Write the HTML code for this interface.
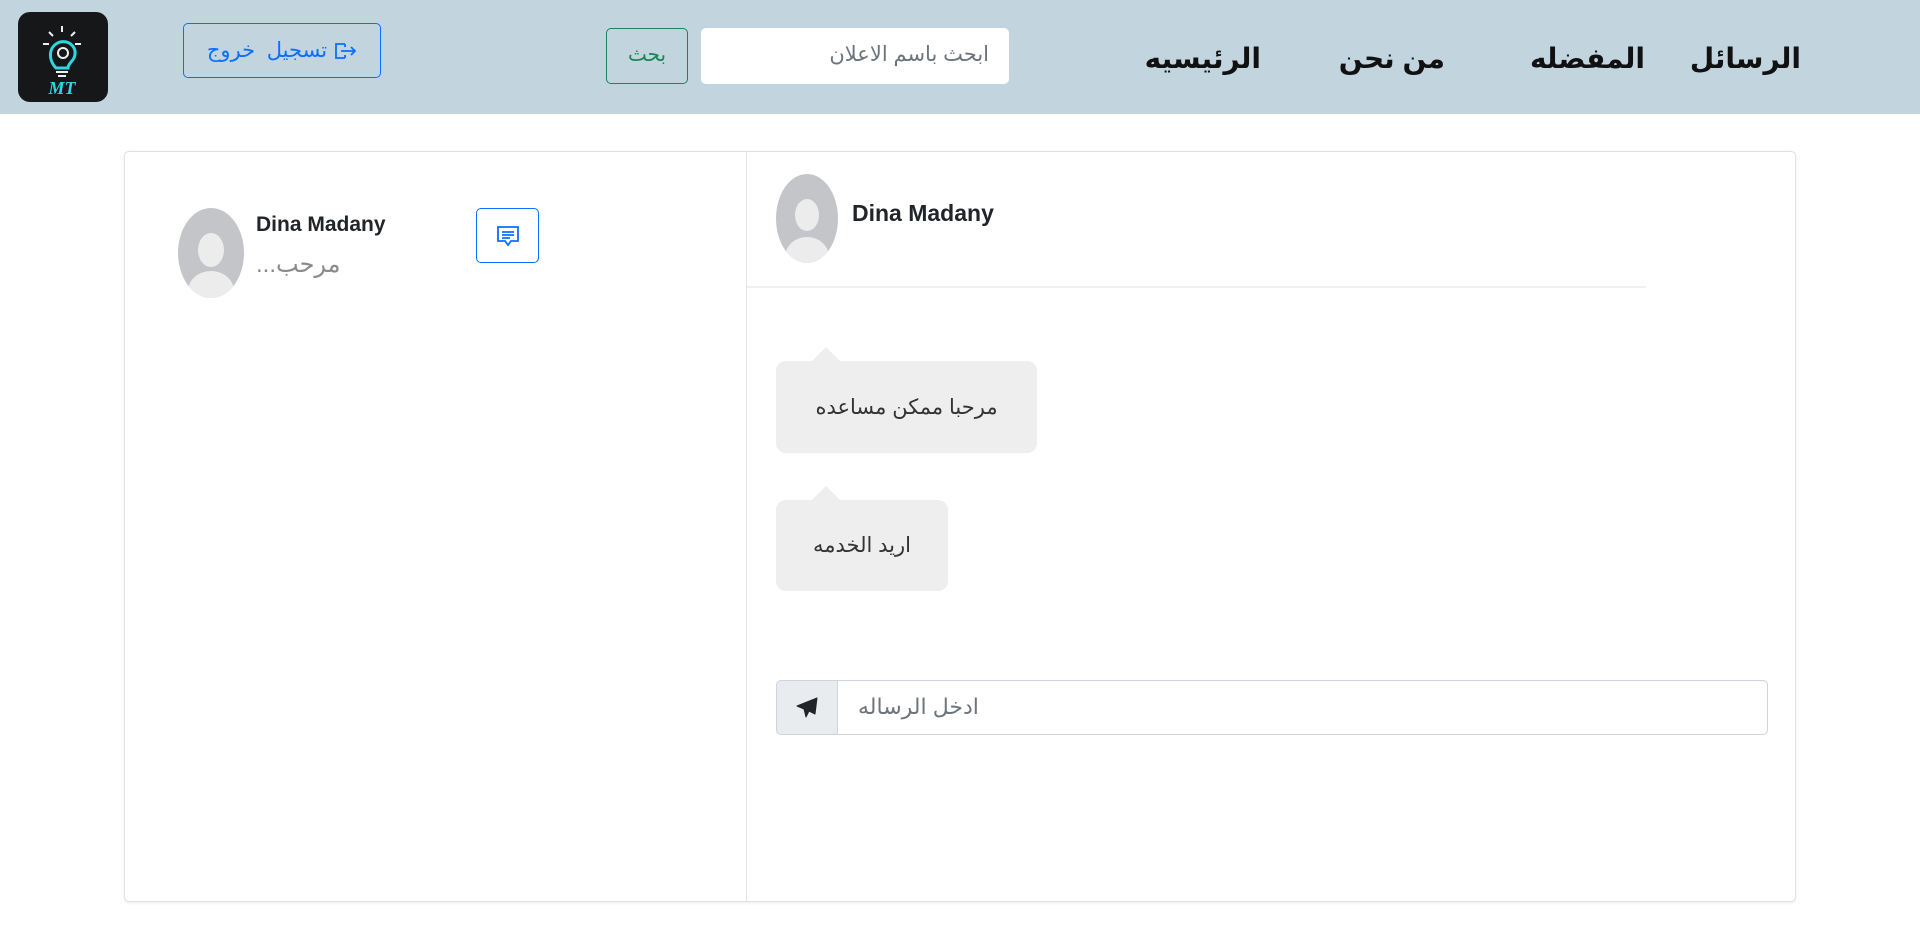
<!DOCTYPE html>
<html><head><meta charset="utf-8"><style>
*{box-sizing:border-box;margin:0;padding:0}
body{width:1920px;height:946px;background:#fff;font-family:"Liberation Sans","DejaVu Sans","Noto Sans CJK SC",sans-serif;position:relative;overflow:hidden;color:#212529}
.a{position:absolute}
.hdr{left:0;top:0;width:1920px;height:114px;background:#c2d5df}
.nav{font-size:28px;font-weight:bold;color:#111;top:42px;white-space:nowrap;direction:rtl}
.av{background:#c4c5c9;border-radius:50%;overflow:hidden}
.av .h{position:absolute;background:#ececec;border-radius:50%}
.bub{background:#eee;border-radius:10px;font-size:21px;color:#333;direction:rtl;display:flex;align-items:center;justify-content:center}
.bub:before{content:"";position:absolute;left:36px;top:-14px;border:14px solid transparent;border-top:0;border-bottom:14px solid #eee}
</style></head><body>
<div class="a hdr"></div>
<div class="a" style="left:18px;top:12px;width:90px;height:90px;background:#161719;border-radius:12px">
<svg width="90" height="90" viewBox="0 0 90 90">
<g stroke="#eee" stroke-width="2"><line x1="44" y1="14" x2="44" y2="20"/><line x1="31" y1="20" x2="35" y2="24"/><line x1="57" y1="20" x2="53" y2="24"/><line x1="25" y1="32" x2="31" y2="32"/><line x1="57" y1="32" x2="63" y2="32"/></g>
<path d="M38 56 C30 48 30 34 42 30 C52 28 60 36 56 46 C54 50 50 52 50 56 Z" fill="none" stroke="#2fd6e0" stroke-width="3"/>
<circle cx="45" cy="41" r="5" fill="none" stroke="#eee" stroke-width="2"/>
<line x1="38" y1="60" x2="50" y2="60" stroke="#eee" stroke-width="2"/><line x1="40" y1="64" x2="48" y2="64" stroke="#eee" stroke-width="2"/>
<text x="44" y="82" text-anchor="middle" font-family="Liberation Serif" font-style="italic" font-weight="bold" font-size="18" fill="#2fd6e0">MT</text>
</svg></div>
<div class="a" style="left:183px;top:23px;width:198px;height:55px;border:1.5px solid #0d6efd;border-radius:5px;color:#0d6efd;font-size:21px;display:flex;align-items:center;justify-content:center;gap:6px">
<span style="direction:rtl">تسجيل&nbsp; خروج</span>
<svg width="24" height="20" viewBox="0 0 24 20" fill="none" stroke="#0d6efd" stroke-width="1.8"><path d="M12 3H3v14h9M12 3v3M12 17v-3M8 10h14M18 6l4 4-4 4"/></svg>
</div>
<div class="a" style="left:606px;top:28px;width:82px;height:56px;border:1.5px solid #198754;border-radius:5px;color:#198754;font-size:20px;display:flex;align-items:center;justify-content:center;padding-bottom:4px">بحث</div>
<div class="a" style="left:701px;top:28px;width:308px;height:56px;background:#fff;border-radius:5px;color:#6c757d;font-size:21px;direction:rtl;padding-right:20px;line-height:54px">ابحث باسم الاعلان</div>
<div class="a nav" style="right:659px">الرئيسيه</div>
<div class="a nav" style="right:475px">من نحن</div>
<div class="a nav" style="right:275px">المفضله</div>
<div class="a nav" style="right:119px">الرسائل</div>

<div class="a" style="left:124px;top:151px;width:1672px;height:751px;border:1.5px solid #dee2e6;border-radius:5px;box-shadow:0 1px 3px rgba(0,0,0,.08)"></div>
<div class="a" style="left:746px;top:152px;width:1px;height:749px;background:#e3e6e9"></div>

<div class="a av" style="left:178px;top:208px;width:66px;height:90px"><div class="h" style="left:20px;top:25px;width:26px;height:34px"></div><div class="h" style="left:10px;top:63px;width:46px;height:40px"></div></div>
<div class="a" style="left:256px;top:213px;font-size:21px;font-weight:bold">Dina Madany</div>
<div class="a" style="left:256px;top:250px;font-size:24px;color:#8a8a8a;direction:rtl">مرحب...</div>
<div class="a" style="left:476px;top:208px;width:63px;height:55px;border:1.5px solid #0d6efd;border-radius:5px;display:flex;align-items:center;justify-content:center">
<svg width="26" height="26" viewBox="0 0 26 26" fill="none" stroke="#0d6efd" stroke-width="1.8"><path d="M3 4h20v14h-7l-3 4-3-4H3z"/><path d="M7 9h12M7 12h12M7 15h8"/></svg></div>

<div class="a av" style="left:776px;top:174px;width:62px;height:89px"><div class="h" style="left:19px;top:25px;width:24px;height:32px"></div><div class="h" style="left:9px;top:63px;width:44px;height:40px"></div></div>
<div class="a" style="left:852px;top:200px;font-size:23px;font-weight:bold">Dina Madany</div>
<div class="a" style="left:747px;top:286px;width:899px;height:2px;background:#f0f0f0"></div>

<div class="a bub" style="left:776px;top:361px;width:261px;height:92px">مرحبا ممكن مساعده</div>
<div class="a bub" style="left:776px;top:500px;width:172px;height:91px">اريد الخدمه</div>

<div class="a" style="left:776px;top:680px;width:62px;height:55px;background:#e9ecef;border:1.5px solid #ced4da;border-radius:5px 0 0 5px;display:flex;align-items:center;justify-content:center">
<svg width="24" height="24" viewBox="0 0 24 24"><path d="M22 2L2 10l7 3 2 8 3-6 6 3z M9 13l13-11" fill="#212529" stroke="#212529" stroke-width="1" stroke-linejoin="round"/></svg></div>
<div class="a" style="left:837px;top:680px;width:931px;height:55px;border:1.5px solid #ced4da;border-radius:0 5px 5px 0;font-size:22px;color:#6c757d;padding-left:20px;line-height:52px">ادخل الرساله</div>
</body></html>
